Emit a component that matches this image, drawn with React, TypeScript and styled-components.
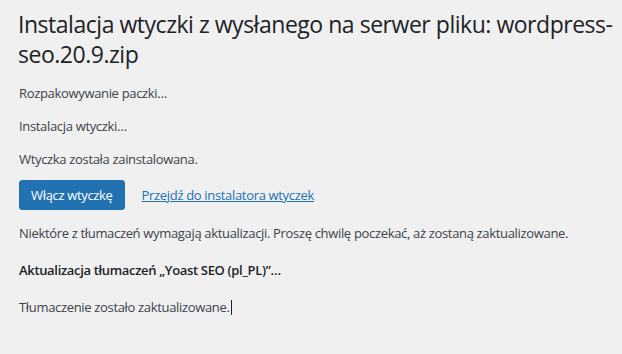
import styled, { createGlobalStyle } from 'styled-components'

const GlobalStyle = createGlobalStyle`
  html, body {
    margin: 0;
    background: #f0f0f1;
  }
  body {
    font-family: "Open Sans", "Noto Sans", sans-serif;
    font-size: 13px;
    line-height: 1.4em;
    letter-spacing: -0.33px;
    color: #3c434a;
  }
`

const Wrap = styled.div`
  display: flex;
  flex-direction: column;
  align-items: flex-start;
  padding: 0 2px 0 18px;
`

const Title = styled.h1`
  margin: 0;
  padding: 10px 0 0;
  font-size: 23px;
  font-weight: 400;
  line-height: 29.9px;
  letter-spacing: -0.47px;
  color: #1d2327;
`

const Message = styled.p<{ $gap?: number }>`
  margin: ${(p) => p.$gap ?? 13}px 0 0 1px;
  font-size: 13px;
  line-height: 20px;
`

const Heading = styled.h2`
  margin: 17px 0 0 1px;
  font-size: 13px;
  font-weight: 600;
  line-height: 20px;
  color: #1d2327;
`

const Actions = styled.div`
  display: flex;
  align-items: center;
  gap: 17px;
  margin: 11px 0 0 1px;
`

const PrimaryButton = styled.a`
  display: inline-flex;
  align-items: center;
  justify-content: center;
  min-height: 30px;
  padding: 0 11px;
  box-sizing: border-box;
  background: #2271b1;
  border: 1px solid #2271b1;
  border-radius: 3px;
  color: #fff;
  font-size: 13px;
  text-decoration: none;
  cursor: pointer;
`

const TextLink = styled.a`
  color: #2271b1;
  text-decoration: underline;
  font-size: 13px;
`

const Caret = styled.span`
  display: inline-block;
  width: 1px;
  height: 15px;
  margin-left: 1px;
  vertical-align: -3px;
  background: #1d2327;
`

export default function App() {
  return (
    <>
      <GlobalStyle />
      <Wrap>
        <Title>Instalacja wtyczki z wysłanego na serwer pliku: wordpress-seo.20.9.zip</Title>
        <Message>Rozpakowywanie paczki…</Message>
        <Message>Instalacja wtyczki…</Message>
        <Message>Wtyczka została zainstalowana.</Message>
        <Actions>
          <PrimaryButton href="#">Włącz wtyczkę</PrimaryButton>
          <TextLink href="#">Przejdź do instalatora wtyczek</TextLink>
        </Actions>
        <Message>
          Niektóre z tłumaczeń wymagają aktualizacji. Proszę chwilę poczekać, aż zostaną zaktualizowane.
        </Message>
        <Heading>Aktualizacja tłumaczeń „Yoast SEO (pl_PL)”…</Heading>
        <Message $gap={17}>
          Tłumaczenie zostało zaktualizowane.<Caret />
        </Message>
      </Wrap>
    </>
  )
}
